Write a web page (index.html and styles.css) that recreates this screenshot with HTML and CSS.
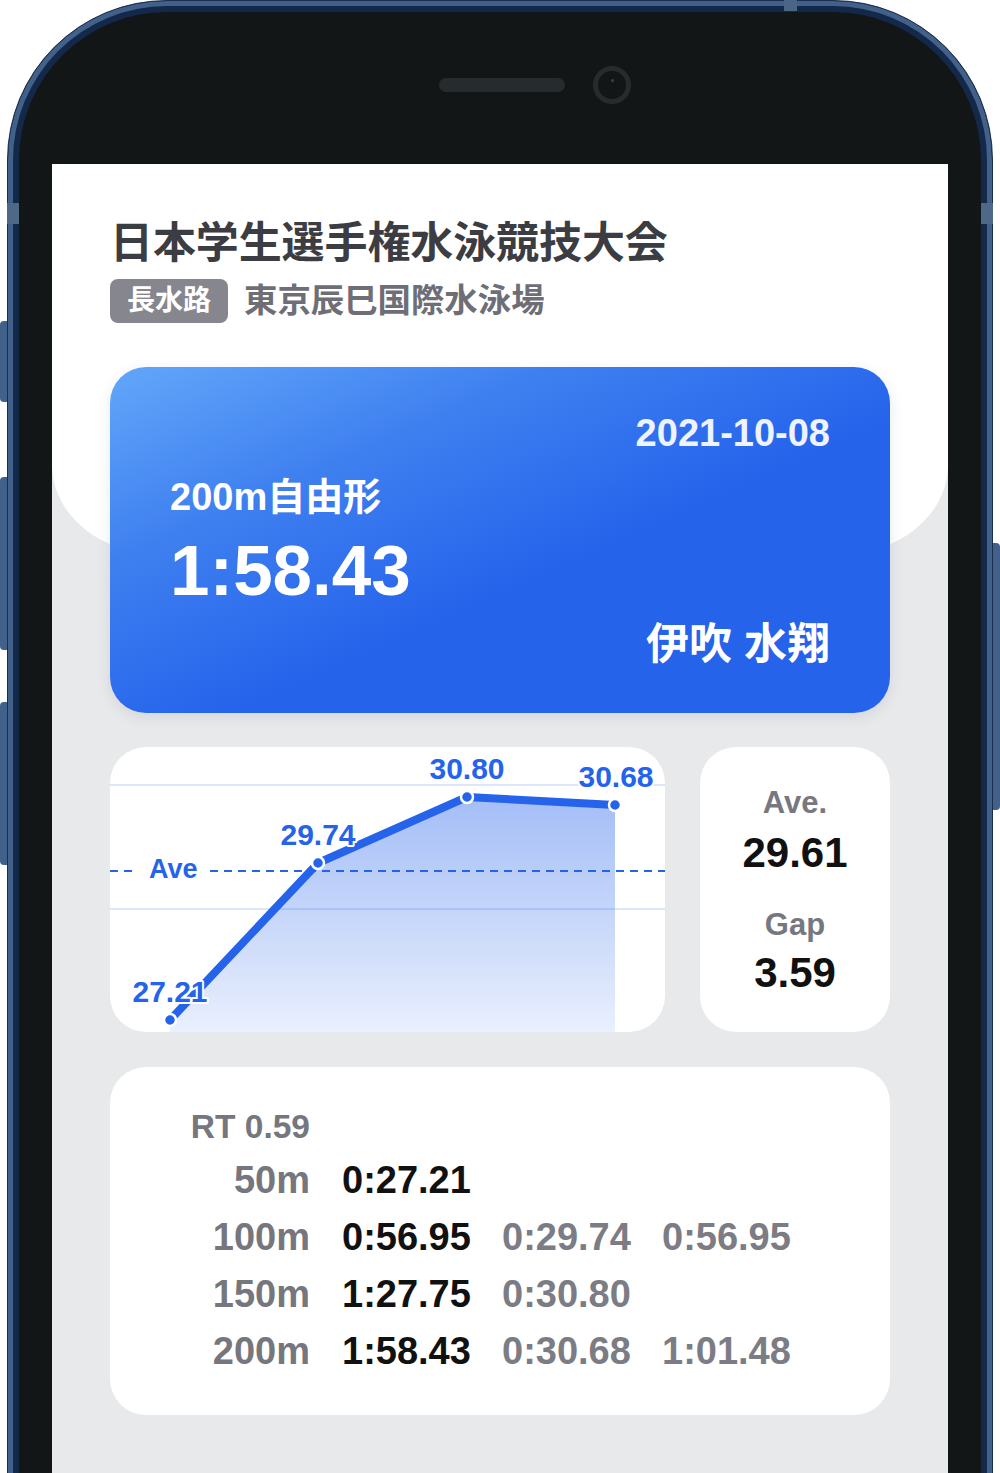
FILE: index.html
```html
<!DOCTYPE html>
<html lang="ja">
<head>
<meta charset="utf-8">
<title>200m自由形 - 日本学生選手権水泳競技大会</title>
<link rel="stylesheet" href="styles.css">
</head>
<body>
<div class="stage">
  <span class="side-btn left b1"></span>
  <span class="side-btn left b2"></span>
  <span class="side-btn left b3"></span>
  <span class="side-btn right b4"></span>
  <span class="band band-l"></span>
  <span class="band band-r"></span>
  <span class="top-btn"></span>

  <div class="device">
    <div class="bezel-top">
      <span class="speaker"></span>
      <span class="camera"><span class="lens"></span></span>
    </div>

    <div class="screen">
      <header class="header">
        <h1 class="title">日本学生選手権水泳競技大会</h1>
        <div class="venue-row">
          <span class="badge">長水路</span>
          <span class="venue">東京辰巳国際水泳場</span>
        </div>
        <section class="result-card">
          <div class="date">2021-10-08</div>
          <div class="event">200m自由形</div>
          <div class="time">1:58.43</div>
          <div class="swimmer">伊吹 水翔</div>
        </section>
      </header>

      <div class="stats-row">
        <div class="chart-card">
          <svg class="chart-svg" viewBox="0 0 555 285" width="555" height="285">
            <defs>
              <linearGradient id="fillGrad" x1="0" y1="0" x2="0" y2="1">
                <stop offset="0" stop-color="#2563eb" stop-opacity="0.42"/>
                <stop offset="1" stop-color="#2563eb" stop-opacity="0.1"/>
              </linearGradient>
            </defs>
            <line class="grid-line" x1="0" y1="38" x2="555" y2="38"/>
            <line class="grid-line" x1="0" y1="162" x2="555" y2="162"/>
            <polygon points="60,273 208,116 357,50 505,58 505,285 60,285" fill="url(#fillGrad)"/>
            <line class="ave-line" x1="0" y1="124" x2="26" y2="124"/>
            <line class="ave-line" x1="100" y1="124" x2="555" y2="124"/>
            <text class="ave-label" x="39" y="131">Ave</text>
            <polyline class="series" points="60,273 208,116 357,50 505,58"/>
            <circle class="pt" cx="60" cy="273" r="6"/>
            <circle class="pt" cx="208" cy="116" r="6"/>
            <circle class="pt" cx="357" cy="50" r="6"/>
            <circle class="pt" cx="505" cy="58" r="6"/>
            <text class="pt-label" x="60" y="255">27.21</text>
            <text class="pt-label" x="208" y="98">29.74</text>
            <text class="pt-label" x="357" y="32">30.80</text>
            <text class="pt-label" x="506" y="40">30.68</text>
          </svg>
        </div>
        <div class="summary-card">
          <div class="sum-label">Ave.</div>
          <div class="sum-value">29.61</div>
          <div class="sum-label second">Gap</div>
          <div class="sum-value second">3.59</div>
        </div>
      </div>

      <div class="splits-card">
        <div class="rt">RT 0.59</div>
        <div class="dist">50m</div><div class="cum">0:27.21</div>
        <div class="dist">100m</div><div class="cum">0:56.95</div><div class="lap">0:29.74</div><div class="lap">0:56.95</div>
        <div class="dist">150m</div><div class="cum">1:27.75</div><div class="lap">0:30.80</div>
        <div class="dist">200m</div><div class="cum">1:58.43</div><div class="lap">0:30.68</div><div class="lap">1:01.48</div>
      </div>
    </div>
  </div>
</div>
</body>
</html>
```

FILE: styles.css
```css
html, body {
  margin: 0;
  padding: 0;
  background: #ffffff;
}

body {
  font-family: "Liberation Sans", "Noto Sans CJK JP", sans-serif;
}

.stage {
  position: relative;
  width: 1000px;
  height: 1473px;
  overflow: hidden;
  background: #ffffff;
}

/* hardware details on the frame */
.side-btn {
  position: absolute;
  width: 7px;
  background: #41618a;
}
.side-btn.left { left: 0; border-radius: 4px 0 0 4px; }
.side-btn.right { left: 993px; border-radius: 0 4px 4px 0; }
.b1 { top: 321px; height: 81px; }
.b2 { top: 477px; height: 173px; }
.b3 { top: 702px; height: 163px; }
.b4 { top: 543px; height: 267px; }

.band {
  position: absolute;
  top: 203px;
  height: 21px;
  width: 12px;
  background: #4d6987;
  z-index: 2;
}
.band-l { left: 7px; }
.band-r { left: 981px; }

.top-btn {
  position: absolute;
  top: 0;
  left: 784px;
  width: 13px;
  height: 11px;
  background: #4a6687;
  z-index: 2;
}

.device {
  box-sizing: border-box;
  width: 986px;
  min-height: 1600px;
  margin-left: 7px;
  padding: 0 44px;
  border: 1px solid #1b2f4d;
  border-radius: 160px 160px 0 0;
  background: #121617;
  box-shadow: inset 0 0 0 5px #41618a, inset 0 0 0 11px #14294a;
}

.bezel-top {
  box-sizing: border-box;
  height: 163px;
  padding: 5px 0 0 387px;
  display: flex;
  align-items: center;
  gap: 28px;
}

.speaker {
  width: 126px;
  height: 14px;
  border-radius: 7px;
  background: #262b2e;
}

.camera {
  box-sizing: border-box;
  width: 38px;
  height: 38px;
  border: 5px solid #262b2e;
  border-radius: 50%;
  display: flex;
  justify-content: center;
  padding-top: 8px;
}

.lens {
  width: 3px;
  height: 3px;
  border-radius: 50%;
  background: #3b4246;
}

.screen {
  background: #e8e9eb;
  min-height: 1420px;
}

/* header */
.header {
  display: flow-root;
  background: #ffffff;
  padding: 53px 58px 0;
  border-radius: 0 0 110px 110px / 0 0 90px 90px;
}

.title {
  margin: 0;
  font-size: 43px;
  line-height: 52px;
  font-weight: 700;
  letter-spacing: -0.1px;
  color: #3c3c43;
  white-space: nowrap;
}

.venue-row {
  display: flex;
  align-items: center;
  gap: 16px;
  margin-top: 10px;
}

.badge {
  height: 44px;
  padding: 0 17px;
  border-radius: 8px;
  background: #86878e;
  color: #ffffff;
  font-size: 28px;
  line-height: 44px;
  font-weight: 700;
}

.venue {
  font-size: 33.4px;
  line-height: 44px;
  font-weight: 700;
  color: #6e6e76;
}

.result-card {
  margin-top: 44px;
  margin-bottom: -158px;
  padding: 47px 60px 45px;
  border-radius: 36px;
  background: linear-gradient(to bottom right, #62a7fa 0%, #3f80f0 28%, #2563eb 58%, #2563eb 100%);
  color: #ffffff;
  box-shadow: 0 4px 14px rgba(30, 50, 90, 0.10);
}

.date {
  text-align: right;
  font-size: 38px;
  line-height: 38px;
  font-weight: 700;
  color: #eef3ff;
}

.event {
  margin-top: 23px;
  font-size: 38px;
  line-height: 44px;
  font-weight: 700;
}

.time {
  margin-top: 17px;
  font-size: 71px;
  line-height: 70px;
  font-weight: 700;
}

.swimmer {
  margin-top: 14px;
  text-align: right;
  font-size: 43px;
  line-height: 48px;
  font-weight: 700;
}

/* stats row */
.stats-row {
  display: grid;
  grid-template-columns: 555px 190px;
  column-gap: 35px;
  height: 285px;
  margin: 192px 58px 0;
}

.chart-card {
  background: #ffffff;
  border-radius: 36px;
  overflow: hidden;
}

.chart-svg {
  display: block;
}

.grid-line {
  stroke: #dce6fb;
  stroke-width: 2;
}

.ave-line {
  stroke: #2563eb;
  stroke-width: 2;
  stroke-dasharray: 8 6;
}

.ave-label {
  font-family: "Liberation Sans", sans-serif;
  font-size: 27px;
  font-weight: 700;
  fill: #2563eb;
}

.series {
  fill: none;
  stroke: #2563eb;
  stroke-width: 8;
  stroke-linejoin: round;
  stroke-linecap: round;
}

.pt {
  fill: #2563eb;
  stroke: #ffffff;
  stroke-width: 2.5;
}

.pt-label {
  font-family: "Liberation Sans", sans-serif;
  font-size: 30px;
  font-weight: 700;
  fill: #2563eb;
  stroke: #ffffff;
  stroke-width: 4px;
  stroke-linejoin: round;
  paint-order: stroke;
  text-anchor: middle;
}

.summary-card {
  box-sizing: border-box;
  background: #ffffff;
  border-radius: 36px;
  text-align: center;
  padding-top: 39px;
}

.sum-label {
  font-size: 31px;
  line-height: 34px;
  font-weight: 700;
  color: #77787f;
}

.sum-label.second {
  margin-top: 31px;
}

.sum-value {
  margin-top: 9px;
  font-size: 42px;
  line-height: 48px;
  font-weight: 700;
  color: #111111;
}

.sum-value.second {
  margin-top: 7px;
}

/* splits */
.splits-card {
  margin: 35px 58px 0;
  padding: 35px 0;
  background: #ffffff;
  border-radius: 36px;
  display: grid;
  grid-template-columns: 200px 128px 128px 128px;
  column-gap: 32px;
  font-size: 38px;
  line-height: 57px;
  font-weight: 700;
  white-space: nowrap;
}

.rt {
  grid-column: 1;
  text-align: right;
  font-size: 33.5px;
  line-height: 50px;
  color: #76767e;
}

.dist {
  grid-column: 1;
  text-align: right;
  color: #76767e;
}

.cum {
  color: #111111;
}

.lap {
  color: #7b7c84;
}
```
